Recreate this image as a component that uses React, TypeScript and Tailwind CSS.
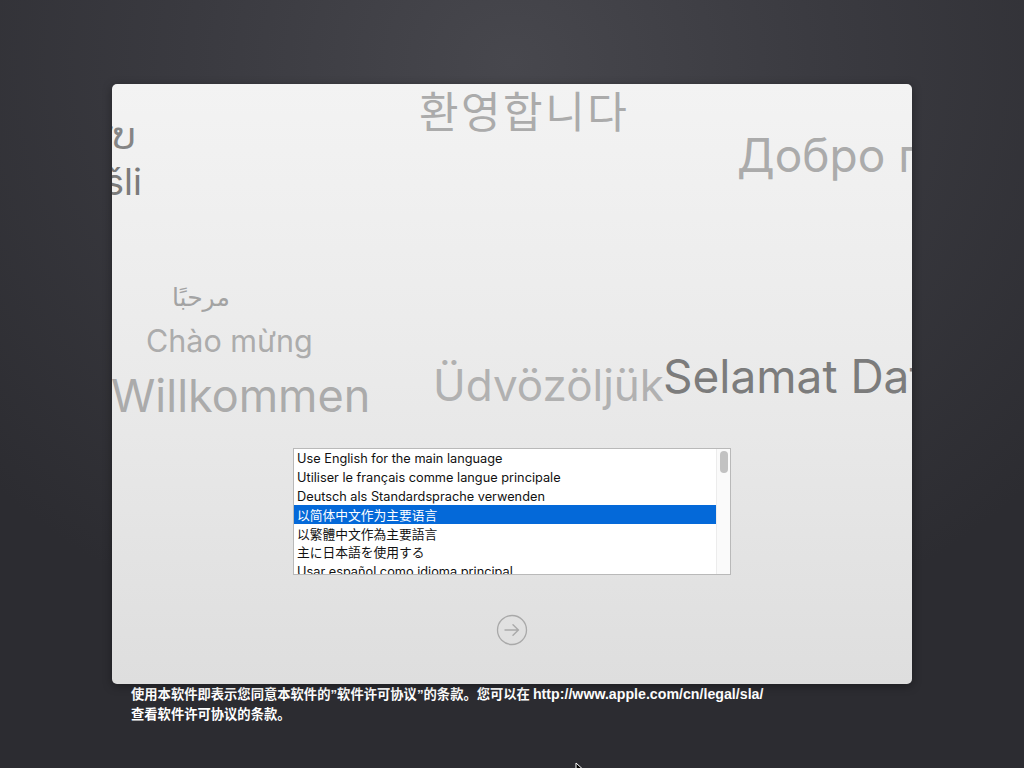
import React from 'react';

const sans = "font-['Inter','Noto_Sans','Noto_Sans_CJK_SC',sans-serif]";

const languages = [
  'Use English for the main language',
  'Utiliser le français comme langue principale',
  'Deutsch als Standardsprache verwenden',
  '以简体中文作为主要语言',
  '以繁體中文作為主要語言',
  '主に日本語を使用する',
  'Usar español como idioma principal',
];

function ArrowButton() {
  return (
    <svg width="32" height="32" viewBox="0 0 32 32" fill="none">
      <circle cx="16" cy="16" r="14.5" stroke="#a9a9a9" strokeWidth="1.3" />
      <path d="M9 16h13.5M17 10.8l5.4 5.2-5.4 5.2" stroke="#a9a9a9" strokeWidth="1.4" strokeLinecap="round" strokeLinejoin="round" />
    </svg>
  );
}

export default function App() {
  return (
    <div className="relative w-[1024px] h-[768px] overflow-hidden bg-[radial-gradient(ellipse_70%_80%_at_50%_8%,#47474d_0%,#3a3a40_45%,#2c2c31_100%)]">
      <div className="flex flex-col items-center pt-[84px]">
        {/* setup window */}
        <div className="relative w-[800px] h-[600px] rounded-[5px] overflow-hidden bg-linear-to-b from-[#f3f3f3] via-[#eaeaea] to-[#dedede] shadow-[0_2px_10px_rgba(0,0,0,0.35)] flex flex-col items-center">
          {/* floating greetings */}
          <div className="absolute left-[307px] top-[4px] text-[43px] leading-none text-[#ababab] font-['Noto_Sans_CJK_KR',sans-serif] tracking-[2.5px]">환영합니다</div>
          <div className={`absolute left-[625px] top-[48px] text-[46px] leading-none text-[#ababab] whitespace-nowrap ${sans}`}>Добро пожаловать</div>
          <div className="absolute right-[776px] top-[34px] text-[37px] leading-none text-[#858585] whitespace-nowrap font-['DejaVu_Sans',sans-serif]">ຍິນດີຕ້ອນຮັບ</div>
          <div className={`absolute right-[770px] top-[79px] text-[37px] leading-none text-[#7b7b7b] whitespace-nowrap ${sans}`}>Dobrodošli</div>
          <div className="absolute left-[60px] top-[201px] text-[25px] leading-none text-[#a3a3a3] font-['DejaVu_Sans',sans-serif]" dir="rtl">مرحبًا</div>
          <div className={`absolute left-[34px] top-[242px] text-[30.5px] leading-none text-[#acacac] whitespace-nowrap ${sans}`}>Chào mừng</div>
          <div className={`absolute left-[-1px] top-[289px] text-[45px] leading-none text-[#ababab] whitespace-nowrap ${sans}`}>Willkommen</div>
          <div className={`absolute left-[321px] top-[279px] text-[44px] leading-none text-[#b1b1b1] whitespace-nowrap ${sans}`}>Üdvözöljük</div>
          <div className={`absolute left-[551px] top-[269px] text-[46px] leading-none text-[#7c7c7c] whitespace-nowrap ${sans}`}>Selamat Datang</div>

          {/* language list */}
          <div className="relative mt-[364px] w-[438px] h-[127px] bg-white border border-[#b9b9b9] flex">
            <div className={`flex-1 overflow-hidden ${sans}`}>
              {languages.map((l, i) => (
                <div
                  key={l}
                  className={`h-[18.8px] pl-[3px] pt-[1px] flex items-center text-[12.75px] whitespace-nowrap ${
                    i === 3 ? 'bg-[#0469d9] text-white' : 'text-[#111]'
                  }`}
                >
                  {l}
                </div>
              ))}
            </div>
            <div className="w-[14px] border-l border-[#ececec] bg-[#fafafa] flex justify-center pt-[2px]">
              <div className="w-[8px] h-[22px] rounded-full bg-[#c2c2c2]" />
            </div>
          </div>

          <div className="mt-[39px]">
            <ArrowButton />
          </div>
        </div>

        {/* licence note */}
        <div className="w-[800px] pl-[19px] text-[13.3px] font-semibold text-white font-['Noto_Sans_CJK_SC',sans-serif]">
          <div className="h-[20px] leading-[20px] whitespace-nowrap">
            使用本软件即表示您同意本软件的<span className="font-['Liberation_Sans',sans-serif] font-bold">”</span>软件许可协议<span className="font-['Liberation_Sans',sans-serif] font-bold">”</span>的条款。您可以在 <span className="font-['Liberation_Sans',sans-serif] font-bold text-[14.2px]">http://www.apple.com/cn/legal/sla/</span>
          </div>
          <div className="h-[20px] leading-[20px]">查看软件许可协议的条款。</div>
        </div>
      </div>

      {/* mouse pointer */}
      <svg className="absolute left-[575px] top-[762px]" width="10" height="14" viewBox="0 0 10 14">
        <path d="M1 1v11l3-3 2 4 1.5-.7-2-4H9z" fill="#000" stroke="#fff" strokeWidth="1" />
      </svg>
    </div>
  );
}
